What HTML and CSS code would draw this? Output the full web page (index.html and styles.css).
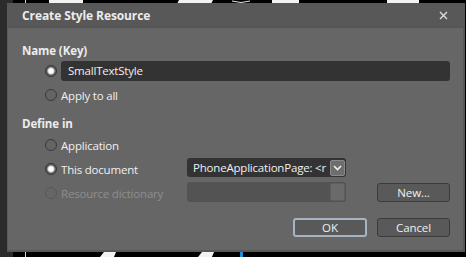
FILE: index.html
```html
<!DOCTYPE html>
<html>
<head>
<meta charset="utf-8">
<link rel="stylesheet" href="styles.css">
</head>
<body>
<svg class="backdrop" width="466" height="257" viewBox="0 0 466 257">
  <rect x="0" y="0" width="13" height="257" fill="#2b2b2b"/>
  <rect x="25" y="0" width="1" height="257" fill="#d8d8d8"/>
  <rect x="49" y="0" width="34" height="4" fill="#f2f2f2"/>
  <polygon points="179,0 213,0 211,4 177,4" fill="#f2f2f2"/>
  <path d="M232 1 Q241 4 250 1" stroke="#e8e8e8" stroke-width="1" fill="none"/>
  <rect x="272" y="0" width="27" height="4" fill="#f2f2f2"/>
  <rect x="387" y="0" width="32" height="4" fill="#f2f2f2"/>
  <polygon points="104,252 116,252 114,257 100,257" fill="#f2f2f2"/>
  <polygon points="202,252 214,252 212,257 198,257" fill="#f2f2f2"/>
  <rect x="240" y="252" width="3" height="5" fill="#1e8fd6"/>
</svg>
<div class="dialog">
  <div class="titlebar">
    <span class="title">Create Style Resource</span>
    <svg class="close" width="9" height="9" viewBox="0 0 9 9">
      <path d="M1 1 L8 8 M8 1 L1 8" stroke="#dcdcdc" stroke-width="1.4" fill="none"/>
    </svg>
  </div>
  <div class="content">
    <div class="header">Name (Key)</div>
    <div class="rows name-rows">
      <div class="row">
        <span class="radio checked"></span>
        <div class="field">SmallTextStyle</div>
      </div>
      <div class="row">
        <span class="radio"></span>
        <span class="label">Apply to all</span>
      </div>
    </div>
    <div class="header header2">Define in</div>
    <div class="define">
      <div class="opt"><span class="radio"></span><span class="label">Application</span></div>
      <div></div><div></div>
      <div class="opt"><span class="radio checked"></span><span class="label">This document</span></div>
      <div class="combo"><span class="combo-text">PhoneApplicationPage: &lt;r</span><span class="combo-btn"><svg width="9" height="6" viewBox="0 0 9 6"><path d="M1 1 L4.5 4.5 L8 1" stroke="#f0f0f0" stroke-width="1.6" fill="none"/></svg></span></div>
      <div></div>
      <div class="opt disabled"><span class="radio"></span><span class="label">Resource dictionary</span></div>
      <div class="combo combo-disabled"><span class="combo-text"></span><span class="combo-btn"></span></div>
      <button class="btn">New...</button>
    </div>
    <div class="actions">
      <button class="btn btn-default">OK</button>
      <button class="btn">Cancel</button>
    </div>
  </div>
</div>
</body>
</html>
```
FILE: styles.css
```css
html, body {
  margin: 0;
  padding: 0;
}
body {
  width: 466px;
  height: 257px;
  background: #000;
  overflow: hidden;
  font-family: "Open Sans", "Noto Sans", "DejaVu Sans", sans-serif;
  color: #f0f0f0;
}
.backdrop {
  position: absolute;
  left: 0;
  top: 0;
  z-index: -1;
}
.dialog {
  margin: 3px 1px 0 7px;
  width: 458px;
  height: 249px;
  background: #585858;
  display: flex;
  flex-direction: column;
  box-sizing: border-box;
  padding: 0 2px 2px 1px;
}
.titlebar {
  height: 24px;
  display: flex;
  align-items: center;
  justify-content: space-between;
  padding: 0 15px 0 14px;
  flex: none;
}
.title {
  font-weight: 700;
  font-size: 12px;
  color: #ececec;
  letter-spacing: -0.1px;
}
.close {
  display: block;
}
.content {
  flex: 1;
  background: #666666;
  border-top: 1px solid #545454;
  padding: 15px 13px 0 14px;
  display: flex;
  flex-direction: column;
  font-size: 11.5px;
  letter-spacing: -0.2px;
}
.header {
  font-weight: 700;
  font-size: 11.5px;
  line-height: 16px;
  height: 16px;
  color: #ececec;
  letter-spacing: -0.1px;
}
.header2 {
  margin-top: 11px;
}
.rows {
  display: flex;
  flex-direction: column;
  gap: 4px;
  margin-top: 2px;
  padding-left: 23px;
}
.row {
  display: flex;
  align-items: center;
  gap: 4px;
  height: 20px;
}
.radio {
  width: 12px;
  height: 12px;
  box-sizing: border-box;
  border-radius: 50%;
  border: 1px solid #3a3a3a;
  background: #646464;
  flex: none;
}
.radio.checked {
  background: radial-gradient(circle, #ffffff 0 2.2px, #d0d0d0 3px, #7a7a7a 3.8px, #545454 5px);
  border-color: #353535;
}
.label {
  white-space: nowrap;
}
.field {
  flex: 1;
  height: 20px;
  box-sizing: border-box;
  background: #333333;
  border-radius: 3px;
  padding-left: 7px;
  line-height: 20px;
}
.define {
  margin-top: 3px;
  padding-left: 23px;
  display: grid;
  grid-template-columns: 142px 159px 73px;
  column-gap: 0;
  row-gap: 4px;
  grid-auto-rows: 20px;
}
.define > :nth-child(3n) {
  margin-left: 31px;
}
.opt {
  display: flex;
  align-items: center;
  gap: 4px;
}
.opt.disabled .label {
  color: #8e8e8e;
}
.opt.disabled .radio {
  border-color: #585858;
  background: #666;
}
.combo {
  display: flex;
  align-items: center;
  justify-content: space-between;
  background: #333333;
  border-radius: 3px;
  height: 19px;
  margin-top: -1px;
  padding-right: 1px;
  overflow: hidden;
}
.combo-text {
  padding-left: 6px;
  white-space: nowrap;
  overflow: hidden;
  flex: 1;
}
.combo-btn {
  width: 15px;
  height: 16px;
  box-sizing: border-box;
  background: #6e6e6e;
  border: 1px solid #8a8a8a;
  border-radius: 2px;
  display: flex;
  align-items: center;
  justify-content: center;
  flex: none;
}
.combo-btn svg {
  display: block;
}
.combo-disabled {
  background: #535353;
  height: 20px;
  margin-top: -1px;
}
.combo-disabled .combo-btn {
  background: #6a6a6a;
  border-color: #5e5e5e;
  height: 18px;
}
.btn {
  font-family: inherit;
  font-size: 11.5px;
  letter-spacing: -0.1px;
  color: #f0f0f0;
  background: #595959;
  border: 1px solid #3b3b3b;
  border-radius: 3px;
  height: 19px;
  padding: 0;
  margin: 0;
  box-sizing: border-box;
  line-height: 16px;
}
.define .btn {
  width: 73px;
}
.actions {
  margin-top: 15px;
  display: flex;
  justify-content: flex-end;
  gap: 10px;
}
.actions .btn {
  width: 73px;
}
.actions .btn-default {
  width: 74px;
  border: 2px solid #a6b3c1;
}
```
